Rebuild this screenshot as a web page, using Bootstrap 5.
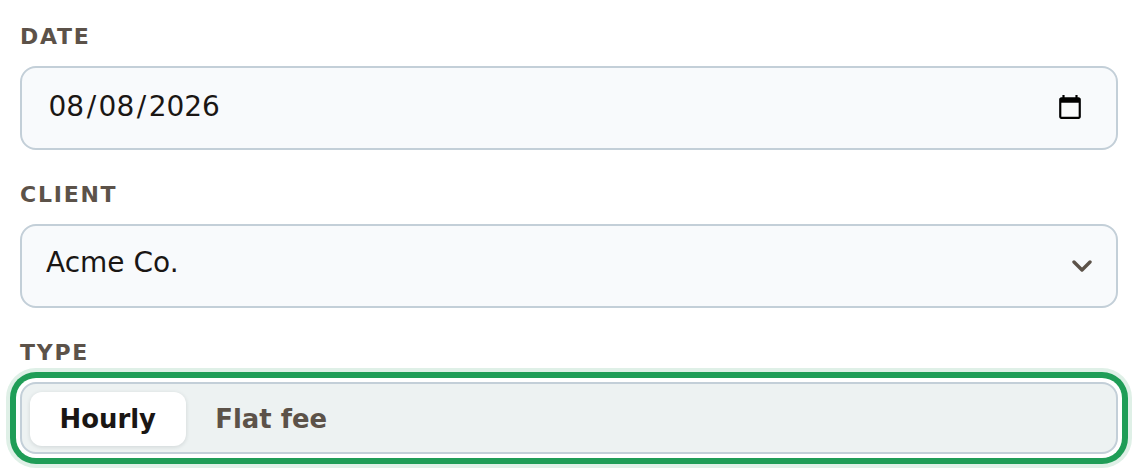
<!doctype html>
<html lang="en">
<head>
<meta charset="utf-8">
<title>Entry form</title>
<link href="https://cdn.jsdelivr.net/npm/bootstrap@5.3.0/dist/css/bootstrap.min.css" rel="stylesheet">
<style>
html,body{background:#fff;overflow:hidden}
body{font-family:"DejaVu Sans",sans-serif;color:#1a1614}
.entry-form{padding:25px 18px 20px 20px}
.field-label{display:block;font-size:22px;line-height:24px;font-weight:700;letter-spacing:1.76px;color:#5c5249;margin:0 0 17px;text-transform:uppercase}
.field-wrap{margin-bottom:33px}
.field-wrap-last{margin-bottom:0}
.entry-form .form-control,.entry-form .form-select{height:84px;border:2px solid #c3cfd8;border-radius:16px;background-color:#f8fafc;color:#1a1614;font-size:28px;box-shadow:none}
.entry-form .form-control{padding:0 24px}
.entry-form .form-control::-webkit-datetime-edit{padding-bottom:3px}
.entry-form .form-control::-webkit-datetime-edit-month-field,
.entry-form .form-control::-webkit-datetime-edit-day-field,
.entry-form .form-control::-webkit-datetime-edit-year-field{padding:2.5px}
.entry-form .form-control::-webkit-calendar-picker-indicator{margin-right:6px}
.entry-form .form-select{padding:0 24px 7px;background-image:url("data:image/svg+xml,%3csvg xmlns='http://www.w3.org/2000/svg' viewBox='0 0 20 12'%3e%3cpath fill='none' stroke='%235c5249' stroke-linecap='round' stroke-linejoin='round' stroke-width='3.4' d='M2 2l8 8 8-8'/%3e%3c/svg%3e");background-position:right 24px center;background-size:20px 12px}
.seg-group{height:72px;border:2px solid #c3cfd8;border-radius:16px;background:#edf2f2;padding:8px;box-shadow:0 0 0 4px #fff,0 0 0 10px #1f9d57,0 0 0 14px #dff0e7}
.seg-btn{height:54px;border:0;border-radius:12px;background:transparent;padding:1px 29.6px 0;font-size:25.9px;font-weight:700;color:#5c5249;line-height:1}
.seg-btn.is-on{background:#fff;color:#1a1614;box-shadow:0 1px 4px rgba(30,40,50,.14)}
</style>
</head>
<body>
<form class="entry-form">
  <div class="field-wrap">
    <label class="field-label" for="d">Date</label>
    <input id="d" class="form-control" type="date" value="2026-08-08">
  </div>
  <div class="field-wrap">
    <label class="field-label" for="c">Client</label>
    <select id="c" class="form-select"><option>Acme Co.</option><option>Globex</option></select>
  </div>
  <div class="field-wrap field-wrap-last">
    <div class="field-label">Type</div>
    <div class="seg-group d-flex" role="group" aria-label="Type">
      <button type="button" class="seg-btn is-on">Hourly</button>
      <button type="button" class="seg-btn">Flat fee</button>
    </div>
  </div>
</form>
<script src="https://cdn.jsdelivr.net/npm/bootstrap@5.3.0/dist/js/bootstrap.bundle.min.js"></script>
</body>
</html>
